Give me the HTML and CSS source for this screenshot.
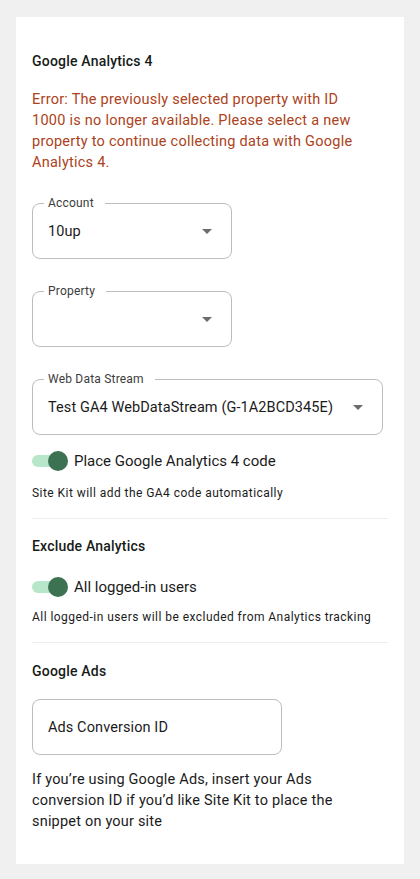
FILE: index.html
```html
<!DOCTYPE html>
<html lang="en">
<head>
<meta charset="utf-8">
<title>Analytics settings</title>
<link rel="stylesheet" href="styles.css">
</head>
<body>
<div class="panel">
  <h3 class="heading first">Google Analytics 4</h3>
  <p class="error">Error: The previously selected property with ID 1000 is no longer available. Please select a new property to continue collecting data with Google Analytics 4.</p>

  <div class="field narrow account">
    <span class="label">Account</span>
    <span class="value">10up</span>
    <span class="arrow"></span>
  </div>
  <div class="field narrow property">
    <span class="label">Property</span>
    <span class="value"></span>
    <span class="arrow"></span>
  </div>
  <div class="field wide stream">
    <span class="label">Web Data Stream</span>
    <span class="value">Test GA4 WebDataStream (G-1A2BCD345E)</span>
    <span class="arrow"></span>
  </div>

  <div class="toggle-row t1">
    <span class="switch"><span class="track"></span><span class="thumb"></span></span>
    <span class="toggle-label">Place Google Analytics 4 code</span>
  </div>
  <p class="help h1">Site Kit will add the GA4 code automatically</p>

  <hr class="divider d1">

  <h3 class="heading h-ex">Exclude Analytics</h3>
  <div class="toggle-row t2">
    <span class="switch"><span class="track"></span><span class="thumb"></span></span>
    <span class="toggle-label">All logged-in users</span>
  </div>
  <p class="help h2">All logged-in users will be excluded from Analytics tracking</p>

  <hr class="divider d2">

  <h3 class="heading h-ads">Google Ads</h3>
  <div class="field input">
    <span class="placeholder">Ads Conversion ID</span>
  </div>
  <p class="ads-help">If you’re using Google Ads, insert your Ads conversion ID if you’d like Site Kit to place the snippet on your site</p>
</div>
</body>
</html>
```

FILE: styles.css
```css
* { box-sizing: border-box; }
html, body { margin: 0; padding: 0; }
body {
  background: #f0f0f1;
  font-family: "Roboto", "Liberation Sans", sans-serif;
  color: #1e1e1e;
  padding: 17px 16px 17px;
}
.panel {
  background: #ffffff;
  padding: 34px 16px 32px;
  display: flex;
  flex-direction: column;
  align-items: flex-start;
}
.heading {
  margin: 0;
  font-size: 14px;
  line-height: 20px;
  font-weight: 500;
  color: #161b18;
  letter-spacing: 0.2px;
}
.error {
  margin: 18px 0 0;
  font-size: 14.5px;
  line-height: 21px;
  color: #ac4220;
  letter-spacing: 0.25px;
  max-width: 340px;
}
.field {
  position: relative;
  height: 56px;
  border: 1px solid #bdbdbd;
  border-radius: 8px;
  display: flex;
  align-items: center;
  padding: 0 15px;
  font-size: 14.5px;
  color: #1b1b1b;
}
.narrow { width: 200px; }
.wide { width: 351px; }
.account { margin-top: 30px; }
.property { margin-top: 32px; }
.stream { margin-top: 32px; }
.label {
  position: absolute;
  top: -9px;
  left: 11px;
  padding: 0 11px 0 4px;
  background: #ffffff;
  font-size: 12px;
  line-height: 16px;
  color: #3c3c3c;
  letter-spacing: 0.2px;
}
.value { flex: 1; letter-spacing: 0.1px; }
.arrow {
  width: 0; height: 0;
  border-left: 5px solid transparent;
  border-right: 5px solid transparent;
  border-top: 5px solid #6c6c6c;
  margin-right: 4px;
}
.toggle-row {
  display: flex;
  align-items: center;
  gap: 6px;
  height: 20px;
}
.t1 { margin-top: 16px; }
.t2 { margin-top: 21px; }
.switch {
  position: relative;
  width: 36px;
  height: 20px;
  display: inline-block;
}
.track {
  position: absolute;
  left: 0; top: 4px;
  width: 30px; height: 12px;
  border-radius: 6px;
  background: #b8e6ca;
}
.thumb {
  position: absolute;
  left: 16px; top: 0;
  width: 20px; height: 20px;
  border-radius: 50%;
  background: #3c7251;
}
.toggle-label {
  font-size: 15px;
  color: #1b1b1b;
  letter-spacing: 0;
}
.help {
  margin: 0;
  font-size: 12px;
  line-height: 16px;
  color: #1b1b1b;
  letter-spacing: 0.45px;
}
.h1 { margin-top: 14px; }
.h2 { margin-top: 12px; }
.d1 { margin: 17px 0 0; }
.d2 { margin: 17px 0 0; }
.divider {
  align-self: stretch;
  border: 0;
  height: 1px;
  background: #ebeef0;
}
.h-ex { margin-top: 17px; }
.h-ads { margin-top: 18px; }
.input { width: 250px; margin-top: 18px; }
.placeholder { letter-spacing: 0.1px; color: #1b1b1b; }
.ads-help {
  margin: 14px 0 0;
  font-size: 14.5px;
  line-height: 21px;
  color: #1b1b1b;
  letter-spacing: 0.2px;
  max-width: 320px;
}
```
